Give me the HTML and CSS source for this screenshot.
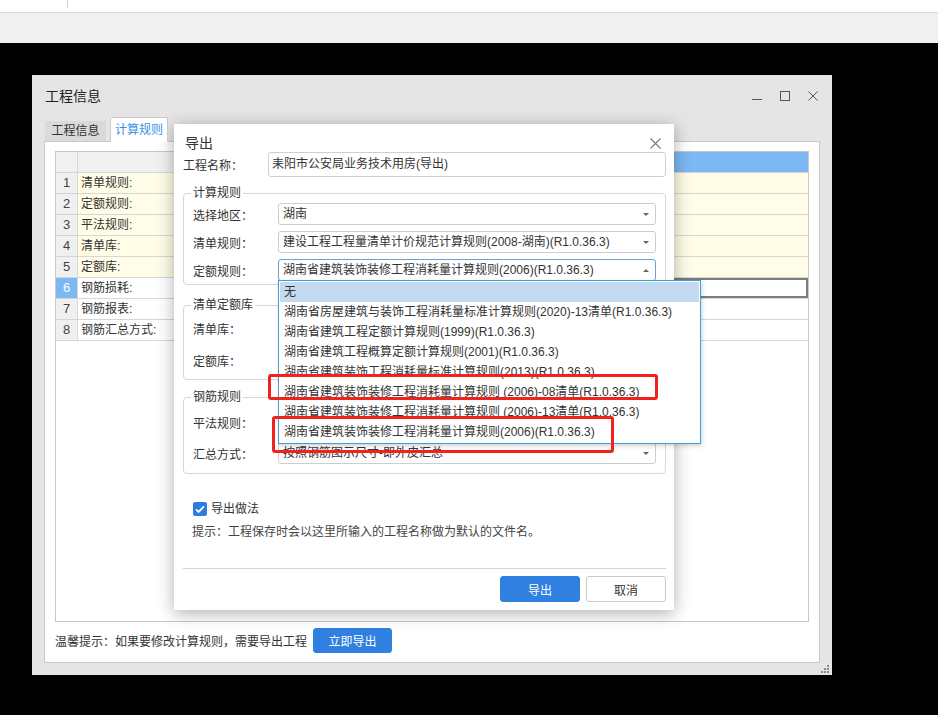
FILE: index.html
```html
<!DOCTYPE html>
<html lang="zh-CN">
<head>
<meta charset="utf-8">
<title>工程信息</title>
<link rel="stylesheet" href="styles.css">
</head>
<body>
<div class="topbar"><span class="topbar-sep"></span></div>
<div class="toolbar"></div>
<div class="stage">
  <div class="window">
    <div class="win-title">
      <span class="win-title-text">工程信息</span>
      <div class="win-controls">
        <svg viewBox="0 0 10 10"><path d="M0 8.5H10" stroke="#555" stroke-width="1"/></svg>
        <svg viewBox="0 0 10 10"><rect x="0.5" y="0.5" width="9" height="9" fill="none" stroke="#555" stroke-width="1"/></svg>
        <svg viewBox="0 0 10 10"><path d="M0.5 0.5L9.5 9.5M9.5 0.5L0.5 9.5" stroke="#555" stroke-width="1"/></svg>
      </div>
    </div>
    <div class="tabs">
      <div class="tab">工程信息</div>
      <div class="tab active">计算规则</div>
    </div>
    <div class="tab-panel">
      <div class="grid-wrap">
        <div class="grid">
          <div class="c num head"></div><div class="c head col1"></div><div class="c head col2 sel-col"></div>

          <div class="c num">1</div><div class="c yl">清单规则:</div><div class="c yl last"></div>
          <div class="c num">2</div><div class="c yl">定额规则:</div><div class="c yl last"></div>
          <div class="c num">3</div><div class="c yl">平法规则:</div><div class="c yl last"></div>
          <div class="c num">4</div><div class="c yl">清单库:</div><div class="c yl last"></div>
          <div class="c num">5</div><div class="c yl">定额库:</div><div class="c yl last"></div>
          <div class="c num cur">6</div><div class="c">钢筋损耗:</div><div class="c last selected"></div>
          <div class="c num">7</div><div class="c">钢筋报表:</div><div class="c last"></div>
          <div class="c num">8</div><div class="c">钢筋汇总方式:</div><div class="c last"></div>
        </div>
      </div>
      <div class="panel-footer">
        <span class="tip">温馨提示：如果要修改计算规则，需要导出工程</span>
        <button class="btn btn-primary btn-export-now">立即导出</button>
      </div>
    </div>
    <svg class="grip" viewBox="0 0 10 10">
      <rect x="8" y="2" width="2" height="2" fill="#8a8a8a"/>
      <rect x="5" y="5" width="2" height="2" fill="#8a8a8a"/>
      <rect x="8" y="5" width="2" height="2" fill="#8a8a8a"/>
      <rect x="2" y="8" width="2" height="2" fill="#8a8a8a"/>
      <rect x="5" y="8" width="2" height="2" fill="#8a8a8a"/>
      <rect x="8" y="8" width="2" height="2" fill="#8a8a8a"/>
    </svg>
  </div>

  <div class="dialog">
    <div class="dlg-title">
      <span class="dlg-title-text">导出</span>
      <svg class="dlg-close" viewBox="0 0 11 11"><path d="M0.5 0.5L10.5 10.5M10.5 0.5L0.5 10.5" stroke="#7a7a7a" stroke-width="1.1"/></svg>
    </div>
    <div class="dlg-body">
      <div class="name-row">
        <span class="lbl">工程名称：</span>
        <div class="input">耒阳市公安局业务技术用房(导出)</div>
      </div>

      <fieldset class="group g1">
        <legend>计算规则</legend>
        <div class="row"><span class="lbl">选择地区：</span><div class="select"><span class="val">湖南</span><i class="caret"></i></div></div>
        <div class="row"><span class="lbl">清单规则：</span><div class="select"><span class="val">建设工程工程量清单计价规范计算规则(2008-湖南)(R1.0.36.3)</span><i class="caret"></i></div></div>
        <div class="row"><span class="lbl">定额规则：</span>
          <div class="select open"><span class="val">湖南省建筑装饰装修工程消耗量计算规则(2006)(R1.0.36.3)</span><i class="caret up"></i>
            <ul class="dropdown">
              <li class="hl">无</li>
              <li>湖南省房屋建筑与装饰工程消耗量标准计算规则(2020)-13清单(R1.0.36.3)</li>
              <li>湖南省建筑工程定额计算规则(1999)(R1.0.36.3)</li>
              <li>湖南省建筑工程概算定额计算规则(2001)(R1.0.36.3)</li>
              <li>湖南省建筑装饰工程消耗量标准计算规则(2013)(R1.0.36.3)</li>
              <li>湖南省建筑装饰装修工程消耗量计算规则 (2006)-08清单(R1.0.36.3)</li>
              <li>湖南省建筑装饰装修工程消耗量计算规则 (2006)-13清单(R1.0.36.3)</li>
              <li>湖南省建筑装饰装修工程消耗量计算规则(2006)(R1.0.36.3)</li>
            </ul>
          </div>
        </div>
      </fieldset>

      <fieldset class="group g2">
        <legend>清单定额库</legend>
        <div class="row"><span class="lbl">清单库：</span><div class="select"><span class="val"></span><i class="caret"></i></div></div>
        <div class="row"><span class="lbl">定额库：</span><div class="select"><span class="val"></span><i class="caret"></i></div></div>
      </fieldset>

      <fieldset class="group g3">
        <legend>钢筋规则</legend>
        <div class="row"><span class="lbl">平法规则：</span><div class="select"><span class="val"></span><i class="caret"></i></div></div>
        <div class="row"><span class="lbl">汇总方式：</span><div class="select"><span class="val">按照钢筋图示尺寸-即外皮汇总</span><i class="caret"></i></div></div>
      </fieldset>

      <div class="check-row">
        <span class="check"><svg viewBox="0 0 14 14"><path d="M3 7.3l2.6 2.6L11 4.4" fill="none" stroke="#fff" stroke-width="1.8"/></svg></span>
        <span>导出做法</span>
      </div>
      <div class="hint">提示：工程保存时会以这里所输入的工程名称做为默认的文件名。</div>

      <div class="dlg-footer">
        <button class="btn btn-primary">导出</button>
        <button class="btn btn-default">取消</button>
      </div>
    </div>
  </div>

  <div class="mark mark-1"></div>
  <div class="mark mark-2"></div>
</div>
</body>
</html>
```
FILE: styles.css
```css
* { box-sizing: border-box; }
html, body { margin: 0; padding: 0; }
body {
  font-family: "Liberation Sans", "Noto Sans CJK SC", sans-serif;
  font-size: 12px;
  color: #333;
  background: #000;
  width: 938px;
  height: 715px;
  overflow: hidden;
}

/* top app chrome */
.topbar {
  height: 13px;
  background: #fff;
  border-bottom: 1px solid #d9d9d9;
  padding-left: 67px;
}
.topbar-sep { display: block; width: 1px; height: 8px; background: #cfcfcf; }
.toolbar { height: 30px; background: #f0f0f0; }

.stage {
  position: relative;
  height: 672px;
  background: #000;
  padding: 32px 0 0 32px;
}

/* background window */
.window {
  position: relative;
  width: 800px;
  height: 600px;
  background: #e5e5e5;
  display: flex;
  flex-direction: column;
}
.win-title {
  height: 42px;
  display: flex;
  align-items: center;
  padding: 0 14px 0 13px;
}
.win-title-text { flex: 1; font-size: 14px; line-height: 20px; color: #222; }
.win-controls { display: flex; gap: 18px; }
.win-controls svg { width: 10px; height: 10px; display: block; }

.tabs {
  height: 24px;
  display: flex;
  align-items: flex-end;
  gap: 4px;
  padding-left: 13px;
}
.tab {
  width: 61px;
  height: 20px;
  line-height: 20px;
  text-align: center;
  background: #dadada;
  color: #333;
}
.tab.active {
  position: relative;
  z-index: 1;
  width: 58px;
  height: 25px;
  line-height: 24px;
  margin-bottom: -1px;
  background: #fff;
  border: 1px solid #c9c9c9;
  border-bottom: none;
  border-radius: 2px 2px 0 0;
  color: #3a8ee6;
}

.tab-panel {
  flex: 1;
  margin: 0 12px 12px;
  background: #fff;
  border: 1px solid #c9c9c9;
  padding: 9px 10px 9px 10px;
  display: flex;
  flex-direction: column;
}
.grid-wrap {
  height: 471px;
  border: 1px solid #c6c6c6;
  background: #fff;
}
.grid {
  display: grid;
  grid-template-columns: 22px 223px 1fr;
  grid-auto-rows: 21px;
}
.c {
  border-right: 1px solid #d6d6d6;
  border-bottom: 1px solid #d6d6d6;
  line-height: 20px;
  padding-left: 3px;
  white-space: nowrap;
  overflow: hidden;
  background: #fff;
}
.c.last { border-right: none; padding-left: 5px; }
.c.num { background: #f0f0f0; text-align: center; padding-left: 0; font-size: 13px; color: #444; }
.c.num.cur { background: #7cb8f5; color: #fff; }
.c.head { background: #f0f0f0; text-align: center; padding-left: 0; }
.c.head.sel-col { background: #7cb8f5; border-right: none; color: #fff; }
.c.yl { background: #fffde7; }
.c.selected { box-shadow: inset 0 0 0 2px #7d7d7d; }

.panel-footer {
  margin-top: 6px;
  height: 25px;
  display: flex;
  align-items: center;
  gap: 6px;
}
.tip { color: #333; }

.btn {
  font-family: inherit;
  font-size: 12px;
  border-radius: 3px;
  cursor: pointer;
  padding: 0;
}
.btn-primary { background: #2f80e1; color: #fff; border: 1px solid #2f80e1; }
.btn-default { background: #fff; color: #333; border: 1px solid #c9c9c9; }
.btn-export-now { width: 79px; height: 25px; }

.grip { position: absolute; right: 3px; bottom: 2px; width: 10px; height: 10px; }

/* dialog */
.dialog {
  position: absolute;
  top: 81px;
  left: 174px;
  width: 500px;
  height: 486px;
  background: #fff;
  box-shadow: 0 3px 16px rgba(0, 0, 0, 0.32);
}
.dlg-title {
  height: 28px;
  padding: 10px 13px 0 11px;
  display: flex;
  align-items: center;
}
.dlg-title-text { flex: 1; font-size: 14px; line-height: 18px; color: #333; }
.dlg-close { width: 11px; height: 11px; display: block; }

.dlg-body { padding: 0 8px 0 9px; }
.name-row { display: flex; align-items: center; height: 25px; }
.name-row .lbl { width: 85px; }
.input {
  flex: 1;
  height: 25px;
  line-height: 23px;
  border: 1px solid #cfcfcf;
  border-radius: 3px;
  padding-left: 3px;
  color: #333;
}

.group {
  margin: 8px 0 0;
  padding: 2px 9px 3px;
  border: 1px solid #d6d6d6;
  border-radius: 4px;
  min-width: 0;
}
.group legend {
  padding: 0 2px;
  margin-left: -2px;
  line-height: 16px;
  font-size: 12px;
  color: #333;
}
.group .row { display: flex; align-items: center; }
.group .row + .row { margin-top: 6px; }
.g2 { margin-top: 12px; padding-top: 4px; padding-bottom: 8px; }
.g2 .row + .row { margin-top: 10px; }
.g3 { margin-top: 9px; padding-top: 6px; padding-bottom: 9px; }
.g3 .row + .row { margin-top: 9px; }

.lbl { width: 85px; flex: none; color: #333; }
.select {
  position: relative;
  flex: 1;
  height: 22px;
  border: 1px solid #cdcdcd;
  border-radius: 3px;
  display: flex;
  align-items: center;
  padding: 0 6px 0 4px;
  background: #fff;
}
.select .val { flex: 1; white-space: nowrap; overflow: hidden; line-height: 18px; }
.select.open { border-color: #6c9fd8; }
.caret {
  width: 0; height: 0;
  border-left: 3px solid transparent;
  border-right: 3px solid transparent;
  border-top: 3px solid #666;
}
.caret.up { border-top: none; border-bottom: 3px solid #666; }

.dropdown {
  position: absolute;
  z-index: 10;
  top: 20px;
  left: -1px;
  width: 423px;
  margin: 0;
  padding: 1px;
  list-style: none;
  background: #fff;
  border: 1px solid #3fa0d8;
  box-shadow: 1px 2px 4px rgba(0, 0, 0, 0.18);
}
.dropdown li {
  height: 20px;
  line-height: 20px;
  padding-left: 4px;
  white-space: nowrap;
  color: #333;
}
.dropdown li.hl { background: #c4daf1; }

.check-row {
  margin-top: 28px;
  height: 14px;
  display: flex;
  align-items: center;
  gap: 4px;
  padding-left: 10px;
  line-height: 14px;
}
.check {
  width: 14px; height: 14px;
  background: #2b7de0;
  border-radius: 2px;
  display: block;
}
.check svg { width: 14px; height: 14px; display: block; }
.hint { margin-top: 7px; line-height: 18px; padding-left: 9px; color: #444; }

.dlg-footer {
  margin-top: 27px;
  border-top: 1px solid #d4d4d4;
  padding: 7px 0 8px;
  display: flex;
  justify-content: flex-end;
  gap: 6px;
}
.dlg-footer .btn { width: 80px; height: 26px; }

/* red annotation boxes */
.mark {
  position: absolute;
  border: 3px solid #f0231c;
  border-radius: 3px;
  z-index: 20;
}
.mark-1 { left: 268px; top: 331px; width: 390px; height: 26px; }
.mark-2 { left: 272px; top: 373px; width: 342px; height: 37px; }
```
